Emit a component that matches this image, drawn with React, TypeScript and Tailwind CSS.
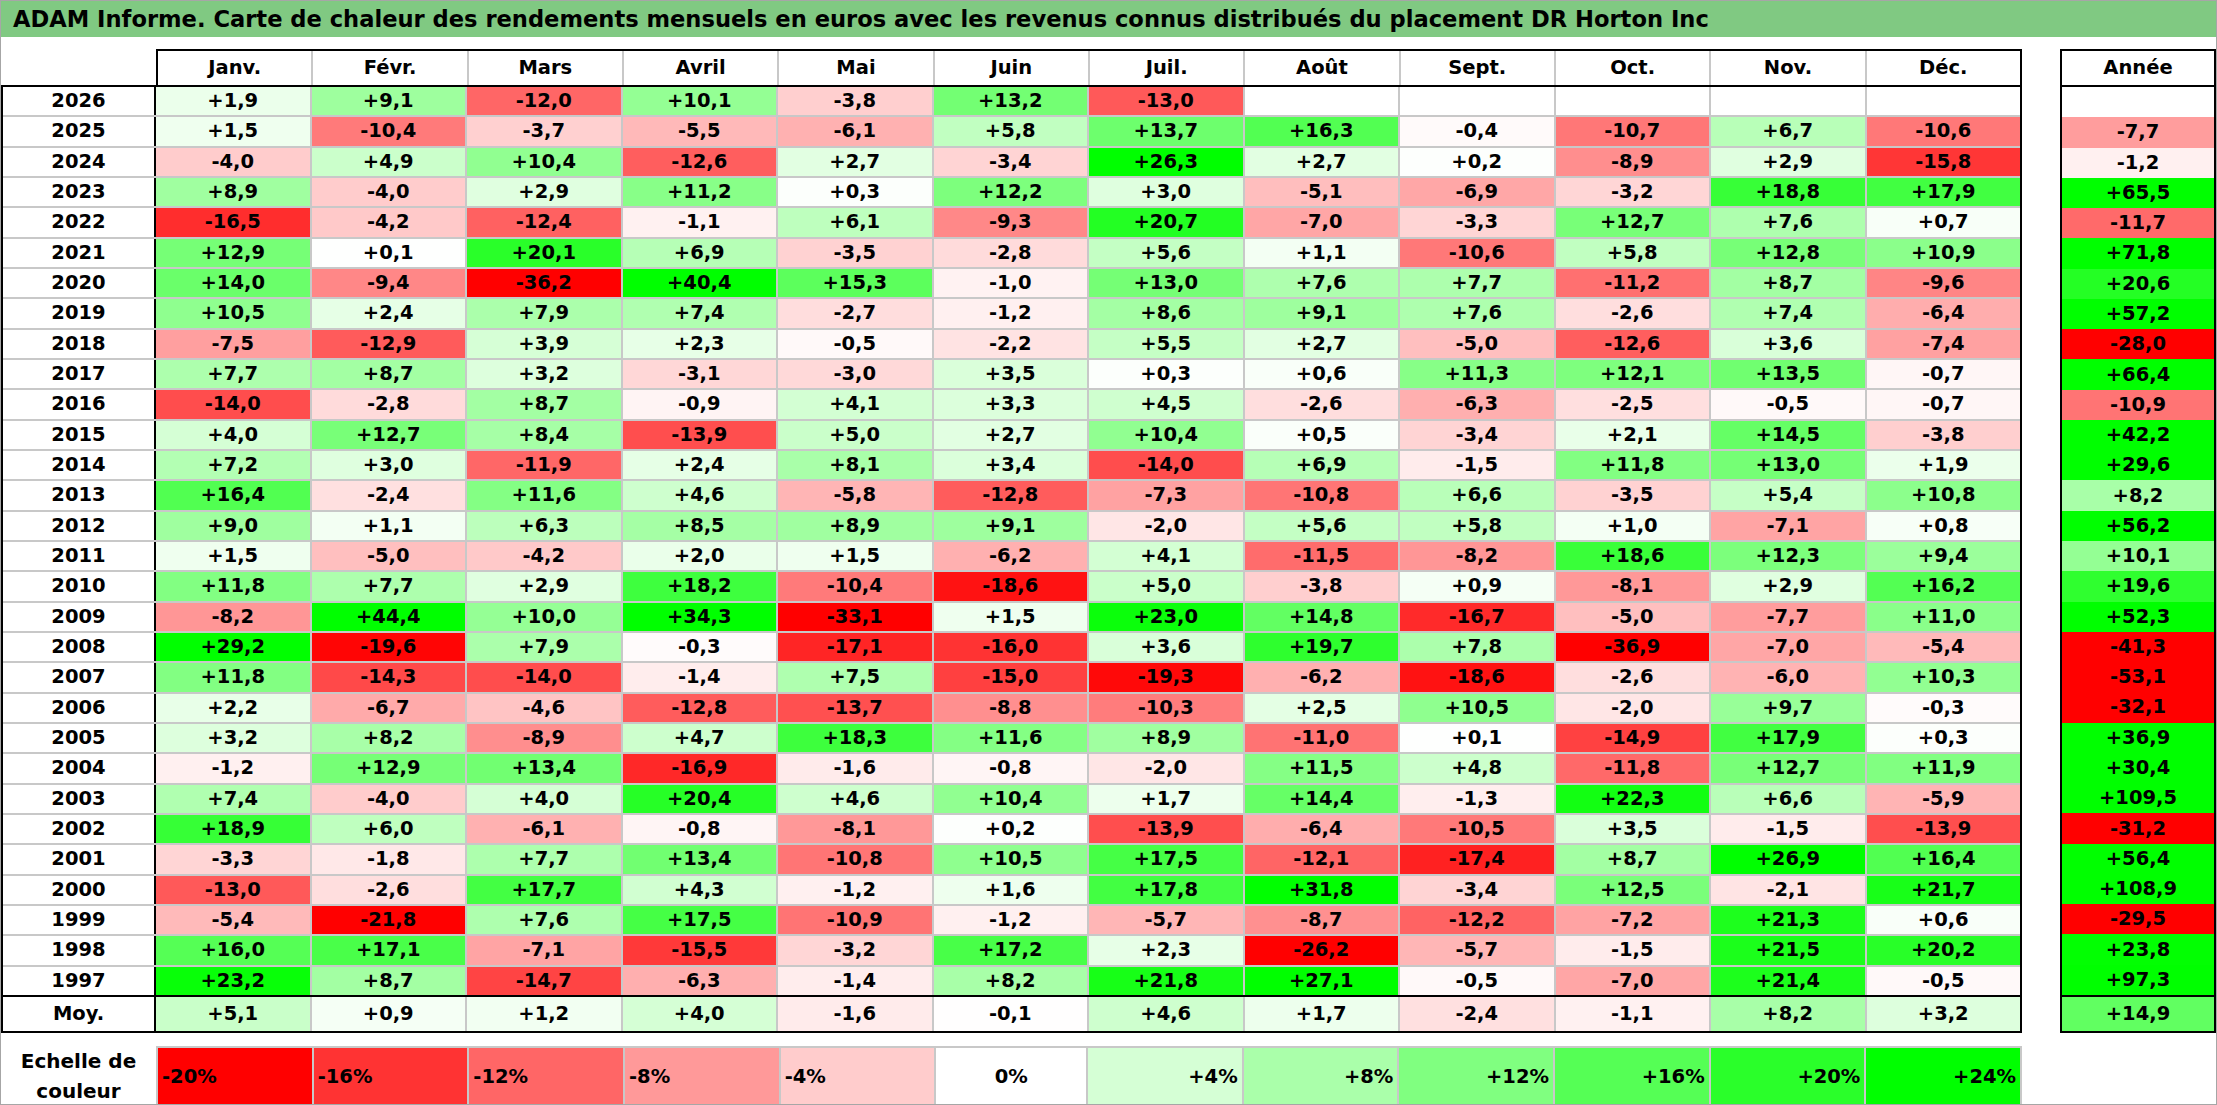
import React from 'react';

const months = ['Janv.', 'Févr.', 'Mars', 'Avril', 'Mai', 'Juin', 'Juil.', 'Août', 'Sept.', 'Oct.', 'Nov.', 'Déc.'];

// year, monthly returns (empty = no data yet), annual return
const rows: [string, string, string][] = [
  ['2026', '+1,9 +9,1 -12,0 +10,1 -3,8 +13,2 -13,0', ''],
  ['2025', '+1,5 -10,4 -3,7 -5,5 -6,1 +5,8 +13,7 +16,3 -0,4 -10,7 +6,7 -10,6', '-7,7'],
  ['2024', '-4,0 +4,9 +10,4 -12,6 +2,7 -3,4 +26,3 +2,7 +0,2 -8,9 +2,9 -15,8', '-1,2'],
  ['2023', '+8,9 -4,0 +2,9 +11,2 +0,3 +12,2 +3,0 -5,1 -6,9 -3,2 +18,8 +17,9', '+65,5'],
  ['2022', '-16,5 -4,2 -12,4 -1,1 +6,1 -9,3 +20,7 -7,0 -3,3 +12,7 +7,6 +0,7', '-11,7'],
  ['2021', '+12,9 +0,1 +20,1 +6,9 -3,5 -2,8 +5,6 +1,1 -10,6 +5,8 +12,8 +10,9', '+71,8'],
  ['2020', '+14,0 -9,4 -36,2 +40,4 +15,3 -1,0 +13,0 +7,6 +7,7 -11,2 +8,7 -9,6', '+20,6'],
  ['2019', '+10,5 +2,4 +7,9 +7,4 -2,7 -1,2 +8,6 +9,1 +7,6 -2,6 +7,4 -6,4', '+57,2'],
  ['2018', '-7,5 -12,9 +3,9 +2,3 -0,5 -2,2 +5,5 +2,7 -5,0 -12,6 +3,6 -7,4', '-28,0'],
  ['2017', '+7,7 +8,7 +3,2 -3,1 -3,0 +3,5 +0,3 +0,6 +11,3 +12,1 +13,5 -0,7', '+66,4'],
  ['2016', '-14,0 -2,8 +8,7 -0,9 +4,1 +3,3 +4,5 -2,6 -6,3 -2,5 -0,5 -0,7', '-10,9'],
  ['2015', '+4,0 +12,7 +8,4 -13,9 +5,0 +2,7 +10,4 +0,5 -3,4 +2,1 +14,5 -3,8', '+42,2'],
  ['2014', '+7,2 +3,0 -11,9 +2,4 +8,1 +3,4 -14,0 +6,9 -1,5 +11,8 +13,0 +1,9', '+29,6'],
  ['2013', '+16,4 -2,4 +11,6 +4,6 -5,8 -12,8 -7,3 -10,8 +6,6 -3,5 +5,4 +10,8', '+8,2'],
  ['2012', '+9,0 +1,1 +6,3 +8,5 +8,9 +9,1 -2,0 +5,6 +5,8 +1,0 -7,1 +0,8', '+56,2'],
  ['2011', '+1,5 -5,0 -4,2 +2,0 +1,5 -6,2 +4,1 -11,5 -8,2 +18,6 +12,3 +9,4', '+10,1'],
  ['2010', '+11,8 +7,7 +2,9 +18,2 -10,4 -18,6 +5,0 -3,8 +0,9 -8,1 +2,9 +16,2', '+19,6'],
  ['2009', '-8,2 +44,4 +10,0 +34,3 -33,1 +1,5 +23,0 +14,8 -16,7 -5,0 -7,7 +11,0', '+52,3'],
  ['2008', '+29,2 -19,6 +7,9 -0,3 -17,1 -16,0 +3,6 +19,7 +7,8 -36,9 -7,0 -5,4', '-41,3'],
  ['2007', '+11,8 -14,3 -14,0 -1,4 +7,5 -15,0 -19,3 -6,2 -18,6 -2,6 -6,0 +10,3', '-53,1'],
  ['2006', '+2,2 -6,7 -4,6 -12,8 -13,7 -8,8 -10,3 +2,5 +10,5 -2,0 +9,7 -0,3', '-32,1'],
  ['2005', '+3,2 +8,2 -8,9 +4,7 +18,3 +11,6 +8,9 -11,0 +0,1 -14,9 +17,9 +0,3', '+36,9'],
  ['2004', '-1,2 +12,9 +13,4 -16,9 -1,6 -0,8 -2,0 +11,5 +4,8 -11,8 +12,7 +11,9', '+30,4'],
  ['2003', '+7,4 -4,0 +4,0 +20,4 +4,6 +10,4 +1,7 +14,4 -1,3 +22,3 +6,6 -5,9', '+109,5'],
  ['2002', '+18,9 +6,0 -6,1 -0,8 -8,1 +0,2 -13,9 -6,4 -10,5 +3,5 -1,5 -13,9', '-31,2'],
  ['2001', '-3,3 -1,8 +7,7 +13,4 -10,8 +10,5 +17,5 -12,1 -17,4 +8,7 +26,9 +16,4', '+56,4'],
  ['2000', '-13,0 -2,6 +17,7 +4,3 -1,2 +1,6 +17,8 +31,8 -3,4 +12,5 -2,1 +21,7', '+108,9'],
  ['1999', '-5,4 -21,8 +7,6 +17,5 -10,9 -1,2 -5,7 -8,7 -12,2 -7,2 +21,3 +0,6', '-29,5'],
  ['1998', '+16,0 +17,1 -7,1 -15,5 -3,2 +17,2 +2,3 -26,2 -5,7 -1,5 +21,5 +20,2', '+23,8'],
  ['1997', '+23,2 +8,7 -14,7 -6,3 -1,4 +8,2 +21,8 +27,1 -0,5 -7,0 +21,4 -0,5', '+97,3'],
];

const avg = '+5,1 +0,9 +1,2 +4,0 -1,6 -0,1 +4,6 +1,7 -2,4 -1,1 +8,2 +3,2'.split(' ');
const avgYear = '+14,9';

const scale = [-20, -16, -12, -8, -4, 0, 4, 8, 12, 16, 20, 24];

// red below zero (full at -20), green above (full at +24)
function heat(v: number) {
  if (v < 0) {
    const c = Math.round(255 * (1 - Math.min(-v / 20, 1)));
    return `rgb(255,${c},${c})`;
  }
  const c = Math.round(255 * (1 - Math.min(v / 24, 1)));
  return `rgb(${c},255,${c})`;
}

function cellBg(s: string) {
  if (!s) return '#ffffff';
  return heat(parseFloat(s.replace(',', '.')));
}

const font = "font-['DejaVu_Sans',sans-serif] font-bold text-black";
const txt = 'text-[19.5px] leading-[22px]';

export default function App() {
  return (
    <div className={`w-[2217px] h-[1105px] bg-white border border-[#a6a6a6] flex flex-col overflow-hidden ${font}`}>
      {/* title */}
      <div className="h-[36px] shrink-0 bg-[#80c982] flex items-center pl-[12px] text-[22.6px] leading-[28px]">
        ADAM Informe. Carte de chaleur des rendements mensuels en euros avec les revenus connus distribués du placement DR Horton Inc
      </div>

      <div className="h-[12px] shrink-0" />

      <div className="flex shrink-0">
        {/* monthly table */}
        <div className="w-[2021px] flex flex-col">
          <div className="h-[38px] flex border-b-2 border-black">
            <div className="w-[155px] shrink-0" />
            <div className="flex-1 flex border-t-2 border-l-2 border-r-2 border-black">
              {months.map((m, i) => (
                <div
                  key={m}
                  className={`flex-1 flex items-center justify-center ${txt} ${i < 11 ? 'border-r-2 border-[#c8c8c8]' : ''}`}
                >
                  {m}
                </div>
              ))}
            </div>
          </div>

          <div className="h-[908px] flex flex-col border-l-2 border-r-2 border-black">
            {rows.map(([year, vals], r) => {
              const v = vals.split(' ');
              return (
                <div key={year} className={`flex-1 min-h-0 flex ${r < rows.length - 1 ? 'border-b-2 border-[#c8c8c8]' : ''}`}>
                  <div className={`w-[153px] shrink-0 border-r-2 border-black flex items-center justify-center ${txt}`}>
                    {year}
                  </div>
                  {months.map((m, i) => (
                    <div
                      key={m}
                      className={`flex-1 flex items-center justify-center ${txt} ${i < 11 ? 'border-r-2 border-[#c8c8c8]' : ''}`}
                      style={{ background: cellBg(v[i] || '') }}
                    >
                      {v[i] || ''}
                    </div>
                  ))}
                </div>
              );
            })}
          </div>

          <div className="h-[38px] flex border-2 border-black">
            <div className={`w-[153px] shrink-0 border-r-2 border-black flex items-center justify-center ${txt}`}>
              Moy.
            </div>
            {avg.map((a, i) => (
              <div
                key={i}
                className={`flex-1 flex items-center justify-center ${txt} ${i < 11 ? 'border-r-2 border-[#c8c8c8]' : ''}`}
                style={{ background: cellBg(a) }}
              >
                {a}
              </div>
            ))}
          </div>
        </div>

        {/* annual column */}
        <div className="ml-[38px] w-[156px] flex flex-col">
          <div className={`h-[38px] border-2 border-black flex items-center justify-center ${txt}`}>Année</div>
          <div className="h-[908px] flex flex-col border-l-2 border-r-2 border-black">
            {rows.map(([year, , y]) => (
              <div
                key={year}
                className={`flex-1 min-h-0 flex items-center justify-center ${txt}`}
                style={{ background: cellBg(y) }}
              >
                {y}
              </div>
            ))}
          </div>
          <div
            className={`h-[38px] border-2 border-black flex items-center justify-center ${txt}`}
            style={{ background: cellBg(avgYear) }}
          >
            {avgYear}
          </div>
        </div>
      </div>

      <div className="h-[13px] shrink-0" />

      {/* colour scale */}
      <div className="flex-1 flex w-[2021px]">
        <div className="w-[155px] shrink-0 flex flex-col items-center justify-center text-[20px] leading-[30px]">
          <span>Echelle de</span>
          <span>couleur</span>
        </div>
        <div className="flex-1 flex border-t-2 border-l-2 border-[#c8c8c8]">
          {scale.map((s) => (
            <div
              key={s}
              className={`flex-1 flex items-center ${txt} border-r-2 border-[#c8c8c8] ${
                s < 0 ? 'justify-start pl-[4px]' : s === 0 ? 'justify-center' : 'justify-end pr-[4px]'
              }`}
              style={{ background: heat(s) }}
            >
              {s > 0 ? `+${s}%` : `${s}%`}
            </div>
          ))}
        </div>
      </div>
    </div>
  );
}
